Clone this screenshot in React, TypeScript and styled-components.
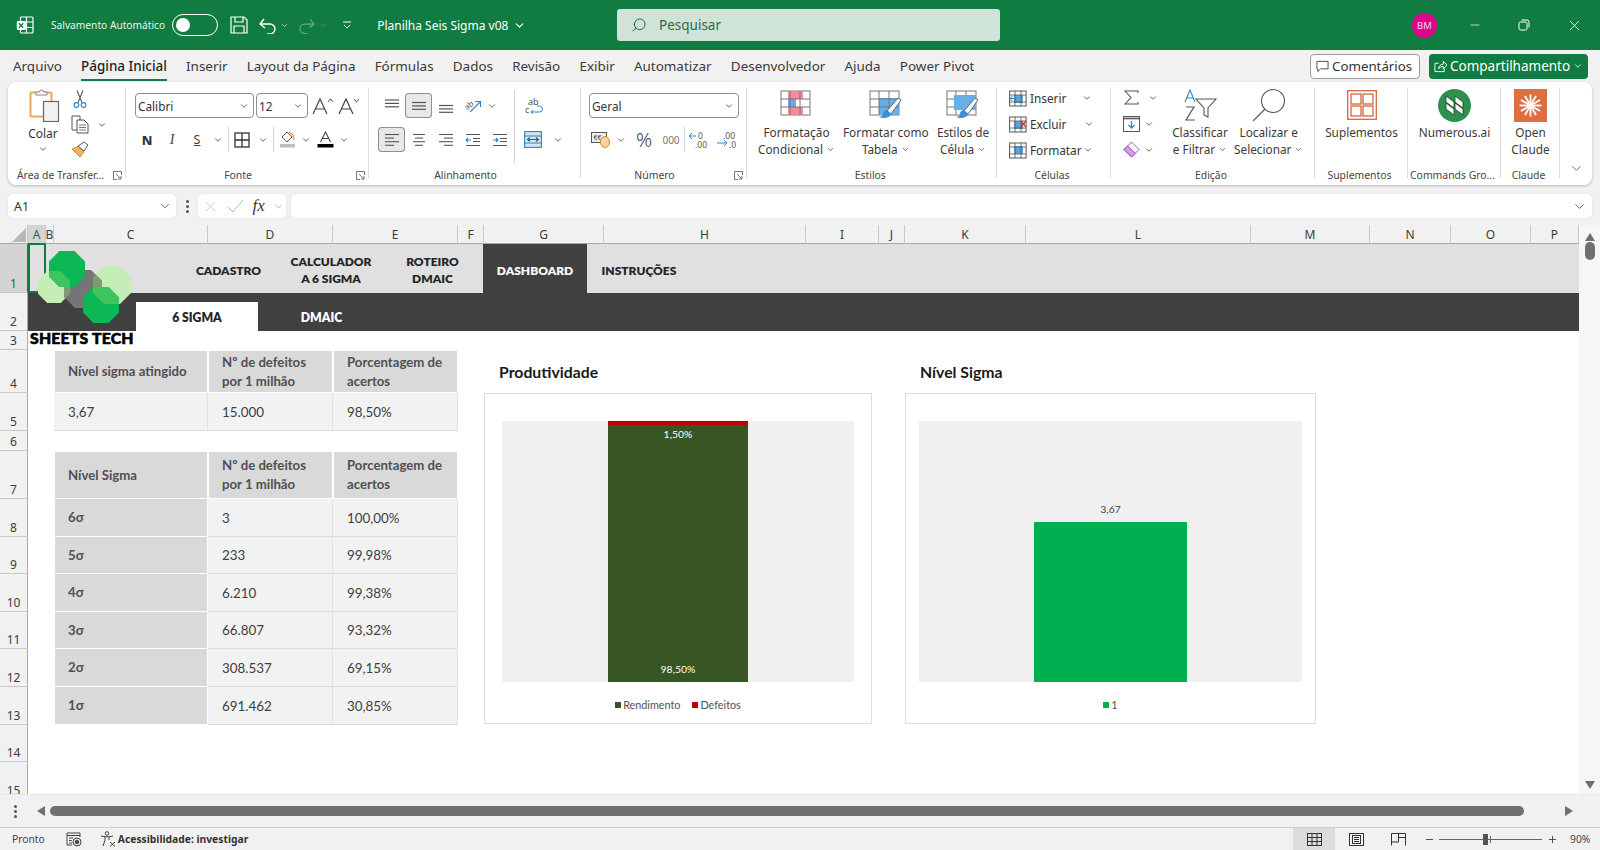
import { ChevronDown, Minus, Plus, Search, X } from 'lucide-react'
import styled, { createGlobalStyle } from 'styled-components'

const UI_FONT = '"Noto Sans", "Open Sans", sans-serif'
const SHEET_FONT = 'Lato, "Noto Sans", sans-serif'
const GREEN = '#107c41'

const COLS = [
  ['A', 18], ['B', 8], ['C', 154], ['D', 125], ['E', 125], ['F', 26], ['G', 120], ['H', 202],
  ['I', 73], ['J', 26], ['K', 121], ['L', 225], ['M', 119], ['N', 81], ['O', 80], ['P', 48],
] as const
const ROWS = [49, 38, 19, 43, 38, 20, 48, 38, 37, 38, 37, 38, 38, 37, 38]

const SIGMA_ROWS = [
  ['6σ', '3', '100,00%'],
  ['5σ', '233', '99,98%'],
  ['4σ', '6.210', '99,38%'],
  ['3σ', '66.807', '93,32%'],
  ['2σ', '308.537', '69,15%'],
  ['1σ', '691.462', '30,85%'],
]

const TABS = ['Arquivo', 'Página Inicial', 'Inserir', 'Layout da Página', 'Fórmulas', 'Dados', 'Revisão', 'Exibir', 'Automatizar', 'Desenvolvedor', 'Ajuda', 'Power Pivot']

const NAV = [
  { lines: ['CADASTRO'], w: 103 },
  { lines: ['CALCULADOR', 'A 6 SIGMA'], w: 102 },
  { lines: ['ROTEIRO', 'DMAIC'], w: 101 },
  { lines: ['DASHBOARD'], w: 104, dark: true },
  { lines: ['INSTRUÇÕES'], w: 104 },
]

const Chev = ({ w = 12 }: { w?: number }) => (
  <IconBtn $w={w}>
    <ChevronDown size={10} strokeWidth={2} color="#444" />
  </IconBtn>
)

const octagon = (cx: number, cy: number, r: number) => {
  const k = r * 0.42
  return [
    [cx - k, cy - r], [cx + k, cy - r], [cx + r, cy - k], [cx + r, cy + k],
    [cx + k, cy + r], [cx - k, cy + r], [cx - r, cy + k], [cx - r, cy - k],
  ].map((p) => p.join(',')).join(' ')
}

const LogoMark = () => {
  const leftLight = octagon(26, 42, 16)
  const rightLight = octagon(84, 40, 19)
  const gray = octagon(55, 44, 19)
  const topGreen = octagon(39, 24, 18)
  const bottomGreen = octagon(73, 60, 18)
  return (
    <LogoSvg width="112" height="90" viewBox="0 0 112 90">
      <defs>
        <clipPath id="lightL"><polygon points={leftLight} /></clipPath>
        <clipPath id="lightR"><polygon points={rightLight} /></clipPath>
        <clipPath id="grayC"><polygon points={gray} /></clipPath>
      </defs>
      <polygon points={leftLight} fill="#c6edb6" />
      <polygon points={rightLight} fill="#c6edb6" />
      <polygon points={gray} fill="#757575" />
      <polygon points={rightLight} fill="#7f9a72" clipPath="url(#grayC)" />
      <polygon points={leftLight} fill="#7f9a72" clipPath="url(#grayC)" />
      <polygon points={topGreen} fill="#0cb856" />
      <polygon points={bottomGreen} fill="#0cb856" />
      <polygon points={topGreen} fill="#3fc45f" clipPath="url(#lightL)" />
      <polygon points={bottomGreen} fill="#3fc45f" clipPath="url(#lightR)" />
    </LogoSvg>
  )
}

const ExcelLogo = () => (
  <svg width="18" height="18" viewBox="0 0 18 18" fill="none" stroke="#fff" strokeWidth="1.2">
    <rect x="4.5" y="1" width="12.5" height="16" rx="1" />
    <path d="M10.5 1v16M4.5 6h12.5M4.5 11.5h12.5" />
    <rect x="0.8" y="5" width="9" height="9" rx="1" fill="#fff" stroke="none" />
    <path d="M3 7.2l4.2 4.6M7.2 7.2L3 11.8" stroke={GREEN} strokeWidth="1.3" />
  </svg>
)

const Paste = () => (
  <svg width="32" height="34" viewBox="0 0 32 34">
    <rect x="1.5" y="4.5" width="21" height="24" rx="1" fill="#fff" stroke="#eba95c" strokeWidth="2" />
    <path d="M7 6V4h3.5a2 2 0 0 1 4 0H18v3H7z" fill="#fff" stroke="#888" strokeWidth="1" />
    <rect x="14.5" y="13.5" width="15" height="20" fill="#f2f2f2" stroke="#666" strokeWidth="1.2" />
  </svg>
)

const Scissors = () => (
  <svg width="14" height="19" viewBox="0 0 14 19" fill="none" strokeWidth="1.1">
    <path d="M4 0.5l5 12M10 0.5l-5 12" stroke="#555" />
    <circle cx="3.4" cy="15" r="2.4" stroke="#2f86c1" />
    <circle cx="10.6" cy="15" r="2.4" stroke="#2f86c1" />
  </svg>
)

const CopyIcon = () => (
  <svg width="18" height="19" viewBox="0 0 18 19" fill="#fff" stroke="#555" strokeWidth="1">
    <path d="M1 1h8v14H1z" />
    <path d="M6 5h7l4 4v9H6z" />
    <path d="M8 10h7M8 12.5h7M8 15h7" strokeWidth=".8" />
  </svg>
)

const Painter = () => (
  <svg width="19" height="17" viewBox="0 0 19 17">
    <path d="M1 8l7-3 5 6-4 5z" fill="#f0b45f" stroke="#d78f35" />
    <path d="M7 5l6-4 4 3-4 6z" fill="#fff" stroke="#555" />
  </svg>
)

const BigA = ({ up }: { up: boolean }) => (
  <svg width="24" height="20" viewBox="0 0 24 20" fill="none">
    <path d="M2 18L9 3l7 15M4.5 13h9" stroke="#444" strokeWidth="1.2" />
    <path d={up ? 'M17 6l2.5-3L22 6' : 'M17 3l2.5 3L22 3'} stroke={up ? '#666' : '#2f86c1'} strokeWidth="1.1" />
  </svg>
)

const BorderIcon = () => (
  <svg width="16" height="16" viewBox="0 0 16 16" fill="none" stroke="#333" strokeWidth="1.3">
    <rect x="1" y="1" width="14" height="14" />
    <path d="M8 1v14M1 8h14" />
  </svg>
)

const FillIcon = () => (
  <svg width="17" height="17" viewBox="0 0 17 17">
    <path d="M8 1l5 5-5 5-5-5z" fill="#fff" stroke="#555" />
    <path d="M10 1l4 3 1 5" fill="none" stroke="#f0a030" strokeWidth="1.4" />
    <rect x="1" y="13" width="15" height="3.5" fill="#bdbdbd" />
  </svg>
)

const FontColor = () => (
  <svg width="17" height="17" viewBox="0 0 17 17">
    <path d="M3.5 11L8.5 1l5 10M5.5 7.5h6" fill="none" stroke="#444" strokeWidth="1.1" />
    <rect x="0.5" y="13" width="16" height="3.5" fill="#000" />
  </svg>
)

const LINES: Record<string, [number, number][]> = {
  left: [[1, 15], [1, 10], [1, 15], [1, 10]],
  center: [[2, 14], [4, 12], [2, 14], [4, 12]],
  right: [[1, 15], [6, 15], [1, 15], [6, 15]],
}

const AlignLines = ({ kind }: { kind: 'left' | 'center' | 'right' }) => (
  <svg width="16" height="14" viewBox="0 0 16 14" stroke="#555" strokeWidth="1.1">
    {LINES[kind].map(([a, b], i) => <line key={i} x1={a} x2={b} y1={1.5 + i * 3.6} y2={1.5 + i * 3.6} />)}
  </svg>
)

const VAlignLines = ({ pos }: { pos: number }) => (
  <svg width="16" height="16" viewBox="0 0 16 16" stroke="#555" strokeWidth="1.2">
    {[0, 1, 2].map((i) => <line key={i} x1={1} x2={15} y1={pos + i * 3.4} y2={pos + i * 3.4} />)}
  </svg>
)

const Indent = ({ flip }: { flip?: boolean }) => (
  <svg width="16" height="14" viewBox="0 0 16 14" fill="none" strokeWidth="1.1">
    <path d="M1 1.5h14M8 5.5h7M8 8.5h7M1 12.5h14" stroke="#555" />
    <path d={flip ? 'M1 7h5M4 5l2 2-2 2' : 'M6 7H1M3 5L1 7l2 2'} stroke="#2f86c1" />
  </svg>
)

const Orientation = () => (
  <svg width="19" height="17" viewBox="0 0 19 17" fill="none" strokeWidth="1.1" overflow="visible">
    <text x="1" y="11" fontSize="8" fill="#555" fontFamily="Noto Sans" transform="rotate(-40 6 8)">ab</text>
    <path d="M7 15L17 5M12 4.5h5.5V10" stroke="#2f86c1" />
  </svg>
)

const WrapIcon = () => (
  <svg width="17" height="18" viewBox="0 0 17 18" fill="none" overflow="visible">
    <text x="3" y="8" fontSize="9" fill="#555" fontFamily="Noto Sans">ab</text>
    <text x="0" y="16" fontSize="9" fill="#555" fontFamily="Noto Sans">c</text>
    <path d="M12 9h2.5a2.5 2.5 0 0 1 0 6H6M8 13l-2 2 2 2" stroke="#2f86c1" />
  </svg>
)

const MergeIcon = () => (
  <svg width="18" height="17" viewBox="0 0 18 17" fill="#cfe6f6" stroke="#2f86c1" strokeWidth="1.1">
    <rect x="0.6" y="0.6" width="16.8" height="15.8" />
    <path d="M0.6 5h16.8M0.6 12h16.8" />
    <path d="M3.5 8.5h11M6 6.5l-2.5 2 2.5 2M12 6.5l2.5 2-2.5 2" fill="none" stroke="#555" />
  </svg>
)

const Currency = () => (
  <svg width="20" height="17" viewBox="0 0 20 17">
    <rect x="0.5" y="1.5" width="15" height="10" fill="#eee" stroke="#555" />
    <text x="2.5" y="9" fontSize="7" fill="#444" fontFamily="Noto Sans">€€</text>
    <ellipse cx="14" cy="11" rx="4.6" ry="5.5" fill="#f9d29a" stroke="#e08a26" />
  </svg>
)

const Decimal = ({ more }: { more: boolean }) => (
  <svg width="24" height="18" viewBox="0 0 24 18" fill="none" overflow="visible">
    <text x={more ? 7 : 10} y="8" fontSize="8.5" fill="#555" fontFamily="Noto Sans">{more ? '.00' : '0'}</text>
    <text x={more ? 13 : 7} y="17" fontSize="8.5" fill="#555" fontFamily="Noto Sans">{more ? '.0' : '.00'}</text>
    <path d={more ? 'M1 12h10M8 9l3 3-3 3' : 'M8 5H1M4 2L1 5l3 3'} stroke="#2f86c1" />
  </svg>
)

const StyleGrid = ({ kind }: { kind: 'cond' | 'table' | 'cell' }) => (
  <svg width="34" height="30" viewBox="0 0 34 30">
    <rect x="1" y="1" width="29" height="24" fill="#fff" stroke="#777" />
    {kind === 'cond' && (
      <>
        <rect x="8" y="1" width="15" height="8" fill="#f78a9a" />
        <rect x="8" y="9" width="8" height="8" fill="#6aa9e8" />
        <rect x="8" y="17" width="15" height="8" fill="#f78a9a" />
      </>
    )}
    {kind === 'table' && <rect x="10" y="8" width="20" height="17" fill="#6aaee8" />}
    <path d="M1 9h29M1 17h29M10 1v24M20 1v24" stroke="#777" fill="none" />
    {kind === 'cell' && <rect x="8" y="5" width="22" height="15" fill="#6aaee8" />}
    {kind !== 'cond' && (
      <>
        <path d="M18 21L29 8l3 2-10 14z" fill="#fff" stroke="#666" />
        <path d="M18 20c-3 0-4 2-4 4s-2 3-4 3c4 2 11 1 12-3z" fill="#3c8fd6" />
      </>
    )}
  </svg>
)

const CellIcon = ({ kind }: { kind: 'ins' | 'del' | 'fmt' }) => (
  <svg width="18" height="17" viewBox="0 0 18 17">
    <rect x="0.6" y="1" width="16.5" height="15" fill="#fff" stroke="#555" />
    <rect x="5" y={kind === 'fmt' ? 4 : 5} width="9" height="8" fill="#5aa5dc" />
    <path d="M0.6 5h16.5M0.6 12h16.5M6 1v15M12 1v15" stroke="#555" fill="none" strokeWidth=".8" />
    {kind === 'del' && <path d="M12 5l5 6M17 5l-5 6" stroke="#d13438" strokeWidth="1.3" />}
    {kind === 'ins' && <path d="M1 8.5h7M3.5 6L1 8.5 3.5 11" stroke="#2f86c1" fill="none" />}
  </svg>
)

const Sigma = () => (
  <svg width="15" height="15" viewBox="0 0 15 15" fill="none" stroke="#555" strokeWidth="1.1">
    <path d="M14 3V1H1l6 6.5L1 14h13v-2" />
  </svg>
)

const FillDown = () => (
  <svg width="17" height="16" viewBox="0 0 17 16" fill="#fff" stroke="#555">
    <rect x="0.5" y="0.5" width="16" height="15" />
    <path d="M0.5 2.5h16" strokeWidth="1.6" />
    <path d="M8.5 5v7M5.5 9l3 3 3-3" fill="none" stroke="#2f86c1" strokeWidth="1.3" />
  </svg>
)

const Eraser = () => (
  <svg width="17" height="17" viewBox="0 0 17 17">
    <path d="M8.5 1L16 8.5 8.5 16 1 8.5z" fill="#fff" stroke="#a54fc2" />
    <path d="M4.7 4.8l7.5 7.5L8.5 16 1 8.5z" fill="#d79ae6" stroke="#a54fc2" />
  </svg>
)

const SortFilter = () => (
  <svg width="33" height="33" viewBox="0 0 33 33" fill="none">
    <path d="M1 13L6 1l5 12M2.8 9h6.4" stroke="#2f86c1" strokeWidth="1.1" />
    <path d="M2 18h8L2 31h9" stroke="#555" strokeWidth="1.2" />
    <path d="M12 10h20l-8 9v9l-4-2v-7z" stroke="#555" strokeWidth="1.1" />
  </svg>
)

const Magnifier = () => (
  <svg width="34" height="34" viewBox="0 0 34 34" fill="none" stroke="#555" strokeWidth="1.1">
    <circle cx="21" cy="13" r="11.5" />
    <path d="M13 21L1 33" />
  </svg>
)

const AddIns = () => (
  <svg width="30" height="30" viewBox="0 0 30 30" fill="#fff" stroke="#d0683f" strokeWidth="1.3">
    <rect x="0.7" y="0.7" width="28.6" height="28.6" />
    <rect x="4" y="4" width="10" height="10" />
    <rect x="16" y="4" width="10" height="10" />
    <rect x="4" y="16" width="10" height="10" />
    <rect x="16" y="16" width="10" height="10" />
  </svg>
)

const Numerous = () => (
  <svg width="33" height="33" viewBox="0 0 33 33">
    <circle cx="16.5" cy="16.5" r="16.5" fill="#2f8f4f" />
    <path d="M8 7l8 6v6l-8-6zM8 14l8 6v6l-8-6zM17 7l8 6v6l-8-6zM17 14l8 6v6l-8-6z" fill="#fff" stroke="#1c3d2a" strokeWidth=".8" />
  </svg>
)

const ClaudeMark = () => (
  <svg width="33" height="33" viewBox="0 0 33 33">
    <rect width="33" height="33" fill="#dd6f44" />
    {Array.from({ length: 12 }).map((_, i) => (
      <line key={i} x1="16.5" y1="16.5" x2={16.5 + 11 * Math.cos((i * Math.PI) / 6)} y2={16.5 + 11 * Math.sin((i * Math.PI) / 6)} stroke="#fff" strokeWidth="1.8" />
    ))}
  </svg>
)

const LauncherIcon = () => (
  <svg width="9" height="9" viewBox="0 0 9 9" fill="none" stroke="#666" strokeWidth=".9">
    <path d="M8.5 4V0.5H0.5v8H4M3 3l5 5M8 5v3H5" />
  </svg>
)

const Arrow = ({ dir }: { dir: 'up' | 'down' | 'left' | 'right' }) => {
  const d = { up: 'M5 1l5 8H0z', down: 'M5 9L0 1h10z', left: 'M1 5l8-5v10z', right: 'M9 5L1 0v10z' }[dir]
  return <svg width="10" height="10" viewBox="0 0 10 10"><path d={d} fill="#6f6f6f" /></svg>
}

const Dots = () => (
  <DotColumn><i /><i /><i /></DotColumn>
)

export default function App() {
  return (
    <>
      <GlobalStyle />
      <Window>
        <TitleBar>
          <TitleLeft>
            <ExcelLogo />
            <AutoSaveLabel>Salvamento Automático</AutoSaveLabel>
            <Toggle><Knob /></Toggle>
            <TitleIcon $ml={12}>
              <svg width="18" height="18" viewBox="0 0 18 18" fill="none" stroke="#fff" strokeWidth="1.2">
                <path d="M1 1h13l3 3v13H1z" /><path d="M5 1v5h8V1M4 17v-7h10v7" />
              </svg>
            </TitleIcon>
            <TitleIcon $ml={11}>
              <svg width="18" height="17" viewBox="0 0 18 17" fill="none" stroke="#fff" strokeWidth="1.4">
                <path d="M1 7h10a5 5 0 0 1 0 10H8M5 2L1 7l5 4" />
              </svg>
            </TitleIcon>
            <TitleIcon $ml={3}><ChevronDown size={9} color="#cfe3d8" /></TitleIcon>
            <TitleIcon $ml={9} $dim>
              <svg width="17" height="17" viewBox="0 0 18 17" fill="none" stroke="#fff" strokeWidth="1.3">
                <path d="M17 7H7a5 5 0 0 0 0 10h3M13 2l4 5-5 4" />
              </svg>
            </TitleIcon>
            <TitleIcon $ml={4} $dim><ChevronDown size={9} color="#cfe3d8" /></TitleIcon>
            <TitleIcon $ml={14}>
              <svg width="10" height="10" viewBox="0 0 10 10" fill="none" stroke="#fff"><path d="M1 2h8M2 5l3 3 3-3" /></svg>
            </TitleIcon>
            <DocTitle>Planilha Seis Sigma v08</DocTitle>
            <TitleIcon $ml={5}><ChevronDown size={13} color="#fff" /></TitleIcon>
          </TitleLeft>
          <SearchBox>
            <Search size={16} color="#1d5c3a" style={{ transform: 'scaleX(-1)' }} strokeWidth={1.4} />
            <span>Pesquisar</span>
          </SearchBox>
          <TitleRight>
            <Avatar>BM</Avatar>
            <WinBtn $ml={23}><Minus size={14} strokeWidth={1.2} color="#fff" /></WinBtn>
            <WinBtn $ml={20}>
              <svg width="12" height="12" viewBox="0 0 12 12" fill="none" stroke="#fff"><rect x="1" y="3" width="8" height="8" rx="1.5" /><path d="M3.5 1H9a2 2 0 0 1 2 2v5.5" /></svg>
            </WinBtn>
            <WinBtn $ml={22}><X size={17} strokeWidth={1.2} color="#fff" /></WinBtn>
          </TitleRight>
        </TitleBar>

        <TabRow>
          <Tabs>
            {TABS.map((t) => <Tab key={t} $active={t === 'Página Inicial'}>{t}</Tab>)}
          </Tabs>
          <TabActions>
            <CommentBtn>
              <svg width="13" height="13" viewBox="0 0 14 13" fill="none" stroke="#444"><path d="M1 1h12v8H5l-3 3V9H1z" /></svg>
              Comentários
            </CommentBtn>
            <ShareBtn>
              <svg width="13" height="13" viewBox="0 0 14 13" fill="none" stroke="#fff"><path d="M5 3H1v9h10V8M5 9c0-3 2-5 5-5V1l4 4-4 4V6.5C8 6.5 6 7 5 9z" /></svg>
              Compartilhamento
              <ChevronDown size={10} color="#fff" />
            </ShareBtn>
          </TabActions>
        </TabRow>

        <Ribbon>
          <Group $w={118}>
            <GroupBody $pl={8}>
              <PasteCol>
                <Paste />
                <span>Colar</span>
                <ChevronDown size={10} color="#444" />
              </PasteCol>
              <ClipCol>
                <IconBtn $w={20}><Scissors /></IconBtn>
                <ClipRow><IconBtn $w={20}><CopyIcon /></IconBtn><Chev w={24} /></ClipRow>
                <IconBtn $w={20}><Painter /></IconBtn>
              </ClipCol>
            </GroupBody>
            <LabelRow><GroupLabel $pr={0}>Área de Transfer...</GroupLabel><LauncherIcon /></LabelRow>
          </Group>

          <Group $w={243}>
            <GroupBody $pl={9}>
              <StackedRows>
                <ToolRow>
                  <Combo $w={119}>Calibri<ChevronDown size={10} color="#444" /></Combo>
                  <Combo $w={52}>12<ChevronDown size={10} color="#444" /></Combo>
                  <IconBtn $w={26}><BigA up /></IconBtn>
                  <IconBtn $w={26}><BigA up={false} /></IconBtn>
                </ToolRow>
                <ToolRow>
                  <IconBtn $w={24}><BoldN>N</BoldN></IconBtn>
                  <IconBtn $w={26}><ItalicI>I</ItalicI></IconBtn>
                  <IconBtn $w={24}><UnderS>S</UnderS></IconBtn>
                  <Chev w={18} />
                  <RowSep />
                  <IconBtn $w={24}><BorderIcon /></IconBtn>
                  <Chev w={18} />
                  <RowSep />
                  <IconBtn $w={24}><FillIcon /></IconBtn>
                  <Chev w={14} />
                  <IconBtn $w={24}><FontColor /></IconBtn>
                  <Chev w={14} />
                </ToolRow>
              </StackedRows>
            </GroupBody>
            <LabelRow><GroupLabel $pr={6}>Fonte</GroupLabel><LauncherIcon /></LabelRow>
          </Group>

          <Group $w={212}>
            <GroupBody $pl={9}>
              <StackedRows>
                <ToolRow>
                  <IconBtn $w={27}><VAlignLines pos={2} /></IconBtn>
                  <IconBtn $w={27} $on><VAlignLines pos={4.5} /></IconBtn>
                  <IconBtn $w={27}><VAlignLines pos={7.5} /></IconBtn>
                  <IconBtn $w={27}><Orientation /></IconBtn>
                  <Chev w={12} />
                </ToolRow>
                <ToolRow>
                  <IconBtn $w={27} $on><AlignLines kind="left" /></IconBtn>
                  <IconBtn $w={27}><AlignLines kind="center" /></IconBtn>
                  <IconBtn $w={27}><AlignLines kind="right" /></IconBtn>
                  <IconBtn $w={27}><Indent /></IconBtn>
                  <IconBtn $w={27}><Indent flip /></IconBtn>
                </ToolRow>
              </StackedRows>
              <InnerSep />
              <StackedRows>
                <ToolRow><IconBtn $w={36}><WrapIcon /></IconBtn></ToolRow>
                <ToolRow><IconBtn $w={36}><MergeIcon /></IconBtn><Chev w={14} /></ToolRow>
              </StackedRows>
            </GroupBody>
            <LabelRow><GroupLabel $pr={6}>Alinhamento</GroupLabel><LauncherSpacer /></LabelRow>
          </Group>

          <Group $w={166}>
            <GroupBody $pl={8}>
              <StackedRows>
                <ToolRow><Combo $w={150}>Geral<ChevronDown size={10} color="#444" /></Combo></ToolRow>
                <ToolRow>
                  <IconBtn $w={24}><Currency /></IconBtn>
                  <Chev w={16} />
                  <IconBtn $w={30}><Percent>%</Percent></IconBtn>
                  <IconBtn $w={24}><Thousand>000</Thousand></IconBtn>
                  <RowSep />
                  <IconBtn $w={28}><Decimal more={false} /></IconBtn>
                  <IconBtn $w={28}><Decimal more /></IconBtn>
                </ToolRow>
              </StackedRows>
            </GroupBody>
            <LabelRow><GroupLabel $pr={6}>Número</GroupLabel><LauncherIcon /></LabelRow>
          </Group>

          <Group $w={250}>
            <GroupBody $pl={3}>
              <LargeBtn $w={93}><StyleGrid kind="cond" /><BtnText>Formatação<br />Condicional<ChevronDown size={9} color="#444" /></BtnText></LargeBtn>
              <LargeBtn $w={84}><StyleGrid kind="table" /><BtnText>Formatar como<br />Tabela<ChevronDown size={9} color="#444" /></BtnText></LargeBtn>
              <LargeBtn $w={69}><StyleGrid kind="cell" /><BtnText>Estilos de<br />Célula<ChevronDown size={9} color="#444" /></BtnText></LargeBtn>
            </GroupBody>
            <LabelRow><GroupLabel $pr={0}>Estilos</GroupLabel></LabelRow>
          </Group>

          <Group $w={114}>
            <CellsBody>
              <CellRow><CellIcon kind="ins" /><CellText $w={54}>Inserir</CellText><Chev w={12} /></CellRow>
              <CellRow><CellIcon kind="del" /><CellText $w={56}>Excluir</CellText><Chev w={12} /></CellRow>
              <CellRow><CellIcon kind="fmt" /><CellText $w={50}>Formatar</CellText><Chev w={12} /></CellRow>
            </CellsBody>
            <LabelRow><GroupLabel $pr={0}>Células</GroupLabel></LabelRow>
          </Group>

          <Group $w={204}>
            <GroupBody $pl={12}>
              <EditCol>
                <ClipRow><IconBtn $w={17}><Sigma /></IconBtn><Chev w={25} /></ClipRow>
                <ClipRow><IconBtn $w={17}><FillDown /></IconBtn><Chev w={17} /></ClipRow>
                <ClipRow><IconBtn $w={17}><Eraser /></IconBtn><Chev w={17} /></ClipRow>
              </EditCol>
              <LargeBtn $w={68}><SortFilter /><BtnText>Classificar<br />e Filtrar<ChevronDown size={9} color="#444" /></BtnText></LargeBtn>
              <LargeBtn $w={68}><Magnifier /><BtnText>Localizar e<br />Selecionar<ChevronDown size={9} color="#444" /></BtnText></LargeBtn>
            </GroupBody>
            <LabelRow><GroupLabel $pr={0}>Edição</GroupLabel></LabelRow>
          </Group>

          <Group $w={93}>
            <GroupBody $pl={0}><LargeBtn $w={93}><AddIns /><BtnText>Suplementos</BtnText></LargeBtn></GroupBody>
            <LabelRow><GroupLabel $pr={0}>Suplementos</GroupLabel></LabelRow>
          </Group>

          <Group $w={93}>
            <GroupBody $pl={0}><LargeBtn $w={93}><Numerous /><BtnText>Numerous.ai</BtnText></LargeBtn></GroupBody>
            <LabelRow><GroupLabel $pr={0}>Commands Gro...</GroupLabel></LabelRow>
          </Group>

          <Group $w={59}>
            <GroupBody $pl={0}><LargeBtn $w={59}><ClaudeMark /><BtnText>Open<br />Claude</BtnText></LargeBtn></GroupBody>
            <LabelRow><GroupLabel $pr={0}>Claude</GroupLabel></LabelRow>
          </Group>

          <Collapse><ChevronDown size={15} strokeWidth={1.2} color="#444" /></Collapse>
        </Ribbon>

        <FormulaBar>
          <NameBox>A1<ChevronDown size={14} strokeWidth={1.4} color="#444" /></NameBox>
          <Dots />
          <FuncBox>
            <X size={17} strokeWidth={1} color="#b5b5b5" />
            <svg width="17" height="14" viewBox="0 0 17 14" fill="none" stroke="#b5b5b5"><path d="M1 8l5 5L16 1" /></svg>
            <Fx>fx</Fx>
            <ChevronDown size={11} strokeWidth={1.2} color="#777" />
          </FuncBox>
          <FormulaInput><ChevronDown size={15} strokeWidth={1.3} color="#444" /></FormulaInput>
        </FormulaBar>

        <SheetArea>
          <Sheet>
            <Corner><svg width="14" height="14" viewBox="0 0 14 14"><path d="M14 0v14H0z" fill="#b8b8b8" /></svg></Corner>
            {COLS.map(([name], i) => (
              <ColHead key={name} $col={i + 2} $active={name === 'A'}>{name}</ColHead>
            ))}
            {ROWS.map((_, i) => (
              <RowHead key={i} $row={i + 2} $active={i === 0}>{i + 1}</RowHead>
            ))}

            <NavBand>
              {NAV.map((n) => (
                <NavItem key={n.lines[0]} $w={n.w} $dark={n.dark}>{n.lines.map((l) => <span key={l}>{l}</span>)}</NavItem>
              ))}
            </NavBand>
            <SelectedCell />
            <SubBand>
              <SubTab $on>6 SIGMA</SubTab>
              <SubTab>DMAIC</SubTab>
            </SubBand>
            <BrandText>SHEETS TECH</BrandText>

            <HeadCell $col={4} $row={5}>Nível sigma atingido</HeadCell>
            <HeadCell $col={5} $row={5}>Nº de defeitos<br />por 1 milhão</HeadCell>
            <HeadCell $col={6} $row={5}>Porcentagem de<br />acertos</HeadCell>
            <ValueCell $col={4} $row={6}>3,67</ValueCell>
            <ValueCell $col={5} $row={6}>15.000</ValueCell>
            <ValueCell $col={6} $row={6}>98,50%</ValueCell>

            <HeadCell $col={4} $row={8}>Nível Sigma</HeadCell>
            <HeadCell $col={5} $row={8}>Nº de defeitos<br />por 1 milhão</HeadCell>
            <HeadCell $col={6} $row={8}>Porcentagem de<br />acertos</HeadCell>
            {SIGMA_ROWS.map(([level, defects, pct], i) => [
              <LevelCell key={level} $col={4} $row={9 + i}>{level}</LevelCell>,
              <ValueCell key={level + 'd'} $col={5} $row={9 + i}>{defects}</ValueCell>,
              <ValueCell key={level + 'p'} $col={6} $row={9 + i}>{pct}</ValueCell>,
            ])}

            <ChartTitle $col={8}>Produtividade</ChartTitle>
            <ChartTitle $col={12}>Nível Sigma</ChartTitle>

            <ChartFrame $from={8} $to={11} $mr={7} $px={17}>
              <Plot>
                <StackBar>
                  <RedCap />
                  <StackLabel>1,50%</StackLabel>
                  <StackLabel>98,50%</StackLabel>
                </StackBar>
              </Plot>
              <Legend>
                <LegendItem><Swatch $c="#375623" />Rendimento</LegendItem>
                <LegendItem><Swatch $c="#c00000" />Defeitos</LegendItem>
              </Legend>
            </ChartFrame>

            <ChartFrame $from={12} $to={15} $mr={54} $px={13}>
              <Plot>
                <SingleBarCol>
                  <BarValue>3,67</BarValue>
                  <SingleBar />
                </SingleBarCol>
              </Plot>
              <Legend>
                <LegendItem><Swatch $c="#00b050" />1</LegendItem>
              </Legend>
            </ChartFrame>

            <LogoMark />
          </Sheet>
          <VScroll>
            <Arrow dir="up" />
            <VThumb />
            <VTrack />
            <Arrow dir="down" />
          </VScroll>
        </SheetArea>

        <HScrollRow>
          <Dots />
          <HTrack>
            <Arrow dir="left" />
            <HThumb />
            <Arrow dir="right" />
          </HTrack>
        </HScrollRow>

        <StatusBar>
          <StatusLeft>
            <span>Pronto</span>
            <MacroSlot>
              <svg width="16" height="15" viewBox="0 0 16 15" fill="none" stroke="#444">
                <path d="M1 1h13v4M1 3.5h13M1 1v12h5M3 6h4M3 8.5h3M3 11h3" /><circle cx="11" cy="10" r="4" /><circle cx="11" cy="10" r="1.8" fill="#444" />
              </svg>
            </MacroSlot>
            <AccessSlot>
              <svg width="16" height="16" viewBox="0 0 16 16" fill="none" stroke="#444">
                <circle cx="7" cy="2.5" r="1.8" /><path d="M1 5c4 1 8 1 12 0M5 6v3l-2 6M9 6v3M10 11l5 4.5M15 11l-5 4.5" />
              </svg>
              <b>Acessibilidade: investigar</b>
            </AccessSlot>
          </StatusLeft>
          <StatusRight>
            <ViewBtn $on>
              <svg width="15" height="13" viewBox="0 0 15 13" fill="none" stroke="#333"><rect x=".5" y=".5" width="14" height="12" /><path d="M5 .5v12M10 .5v12M.5 4.5h14M.5 8.5h14" /></svg>
            </ViewBtn>
            <ViewBtn>
              <svg width="15" height="13" viewBox="0 0 15 13" fill="none" stroke="#333"><rect x=".5" y=".5" width="14" height="12" /><rect x="3.5" y="2.5" width="8" height="8" /><path d="M5 4.5h5M5 6.500h5M5 8.5h5" /></svg>
            </ViewBtn>
            <ViewBtn>
              <svg width="15" height="13" viewBox="0 0 15 13" fill="none" stroke="#333"><path d="M.5 12.5V.5h14v12M.5 9h7V.5M7.5 4.5h7" /></svg>
            </ViewBtn>
            <ZoomSign><Minus size={11} color="#444" /></ZoomSign>
            <ZoomTrack><ZoomThumb /></ZoomTrack>
            <ZoomSign><Plus size={11} color="#444" /></ZoomSign>
            <ZoomPct>90%</ZoomPct>
          </StatusRight>
        </StatusBar>
      </Window>
    </>
  )
}

const GlobalStyle = createGlobalStyle`
  html, body {
    margin: 0;
    padding: 0;
    background: #f1f1f1;
  }
  * {
    box-sizing: border-box;
  }
`

const Window = styled.div`
  display: flex;
  flex-direction: column;
  width: 1600px;
  height: 850px;
  overflow: hidden;
  background: #f1f1f1;
  font-family: ${UI_FONT};
  color: #333;
`

const TitleBar = styled.header`
  position: relative;
  display: flex;
  align-items: center;
  justify-content: space-between;
  flex: 0 0 50px;
  padding: 0 11px 0 16px;
  background: ${GREEN};
  color: #fff;
`

const TitleLeft = styled.div`
  display: flex;
  align-items: center;
`

const AutoSaveLabel = styled.span`
  margin-left: 17px;
  font-size: 10.2px;
  color: #eaf3ee;
`

const Toggle = styled.div`
  display: flex;
  align-items: center;
  width: 46px;
  height: 22px;
  margin-left: 7px;
  padding-left: 3px;
  border: 1px solid #fff;
  border-radius: 11px;
`

const Knob = styled.div`
  width: 14px;
  height: 14px;
  border-radius: 50%;
  background: #fff;
`

const TitleIcon = styled.span<{ $ml: number; $dim?: boolean }>`
  display: inline-flex;
  margin-left: ${(p) => p.$ml}px;
  opacity: ${(p) => (p.$dim ? 0.35 : 1)};
`

const DocTitle = styled.span`
  margin-left: 25px;
  font-size: 12px;
`

const SearchBox = styled.div`
  position: absolute;
  left: 617px;
  top: 9px;
  display: flex;
  align-items: center;
  gap: 12px;
  width: 383px;
  height: 32px;
  padding-left: 14px;
  border-radius: 3px;
  background: #cfe3d8;
  font-size: 13.5px;
  color: #2c6b4a;
`

const TitleRight = styled.div`
  display: flex;
  align-items: center;
`

const Avatar = styled.div`
  display: flex;
  align-items: center;
  justify-content: center;
  width: 25px;
  height: 25px;
  border-radius: 50%;
  background: #e3008c;
  font-size: 9.5px;
  color: #f5d6ea;
`

const WinBtn = styled.div<{ $ml: number }>`
  display: flex;
  justify-content: center;
  width: 29px;
  margin-left: ${(p) => p.$ml}px;
`

const TabRow = styled.div`
  display: flex;
  align-items: center;
  justify-content: space-between;
  flex: 0 0 32px;
  padding: 0 12px 0 13px;
`

const Tabs = styled.nav`
  display: flex;
  gap: 19.2px;
`

const Tab = styled.span<{ $active?: boolean }>`
  position: relative;
  padding: 5px 0 4px;
  font-size: 13.45px;
  font-weight: ${(p) => (p.$active ? 500 : 400)};
  color: ${(p) => (p.$active ? '#1e1e1e' : '#3a3a3a')};
  border-bottom: 2px solid ${(p) => (p.$active ? GREEN : 'transparent')};
`

const TabActions = styled.div`
  display: flex;
  align-items: center;
  gap: 9px;
`

const CommentBtn = styled.div`
  display: flex;
  align-items: center;
  gap: 3px;
  height: 25px;
  width: 110px;
  padding-left: 5px;
  border: 1px solid #9a9a9a;
  border-radius: 4px;
  background: #fff;
  font-size: 13.3px;
`

const ShareBtn = styled.div`
  display: flex;
  align-items: center;
  gap: 3px;
  height: 25px;
  width: 159px;
  padding-left: 5px;
  border-radius: 4px;
  background: ${GREEN};
  font-size: 13.5px;
  color: #fff;
  white-space: nowrap;
`

const Ribbon = styled.section`
  display: flex;
  flex: 0 0 103px;
  margin: 0 8px;
  border-radius: 8px;
  background: #fff;
  box-shadow: 0 1px 3px rgba(0, 0, 0, 0.22);
`

const Group = styled.div<{ $w: number }>`
  position: relative;
  display: grid;
  grid-template-rows: 1fr 20px;
  flex: 0 0 ${(p) => p.$w}px;
  min-width: 0;
  &::after {
    content: '';
    position: absolute;
    top: 6px;
    right: 0;
    bottom: 7px;
    width: 1px;
    background: #dcdcdc;
  }
`

const GroupBody = styled.div<{ $pl: number }>`
  display: flex;
  padding-left: ${(p) => p.$pl}px;
`

const LabelRow = styled.div`
  display: flex;
  align-items: center;
  padding-right: 4px;
`

const GroupLabel = styled.span<{ $pr: number }>`
  flex: 1;
  padding-right: ${(p) => p.$pr}px;
  font-size: 10.4px;
  text-align: center;
  white-space: nowrap;
  color: #444;
`

const LauncherSpacer = styled.span`
  width: 9px;
`

const IconBtn = styled.span<{ $w: number; $on?: boolean }>`
  display: inline-flex;
  align-items: center;
  justify-content: center;
  flex: 0 0 auto;
  width: ${(p) => p.$w}px;
  height: 25px;
  border-radius: 4px;
  ${(p) => p.$on && 'background: #e8e8e8; box-shadow: inset 0 0 0 1px #8e8e8e;'}
`

const PasteCol = styled.div`
  display: flex;
  flex-direction: column;
  align-items: center;
  width: 54px;
  padding-top: 6px;
  font-size: 12px;
  span {
    margin-top: 3px;
  }
  svg:first-child {
    margin-left: 4px;
  }
  svg:last-child {
    margin-top: 2px;
  }
`

const ClipCol = styled.div`
  display: flex;
  flex-direction: column;
  align-items: flex-start;
  padding-top: 5px;
`

const ClipRow = styled.div`
  display: flex;
  align-items: center;
`

const StackedRows = styled.div`
  display: flex;
  flex-direction: column;
  gap: 9px;
  padding-top: 11px;
`

const ToolRow = styled.div`
  display: flex;
  align-items: center;
  height: 25px;
`

const Combo = styled.div<{ $w: number }>`
  display: flex;
  align-items: center;
  justify-content: space-between;
  flex: 0 0 ${(p) => p.$w}px;
  height: 25px;
  margin-right: 2px;
  padding: 0 4px 0 2px;
  border: 1px solid #8e8e8e;
  border-radius: 4px;
  font-size: 11.8px;
  color: #333;
`

const BoldN = styled.b`
  font-size: 13px;
  font-weight: 800;
`

const ItalicI = styled.i`
  font-family: 'Liberation Serif', serif;
  font-size: 14px;
  color: #444;
`

const UnderS = styled.span`
  font-size: 12.5px;
  text-decoration: underline;
  color: #444;
`

const RowSep = styled.span`
  flex: 0 0 1px;
  height: 25px;
  margin: 0 1px;
  background: #d5d5d5;
`

const InnerSep = styled.span`
  flex: 0 0 1px;
  margin: 8px 0 2px 1px;
  background: #d5d5d5;
`

const Percent = styled.span`
  font-size: 20px;
  font-weight: 300;
  color: #444;
`

const Thousand = styled.span`
  font-size: 10px;
  color: #777;
`

const LargeBtn = styled.div<{ $w: number }>`
  display: grid;
  grid-template-rows: 38px auto;
  align-items: center;
  justify-items: center;
  align-content: start;
  flex: 0 0 ${(p) => p.$w}px;
  padding-top: 4px;
`

const BtnText = styled.div`
  font-size: 11.8px;
  line-height: 16.5px;
  text-align: center;
  white-space: nowrap;
  color: #3a3a3a;
  svg {
    margin-left: 3px;
  }
`

const CellsBody = styled.div`
  display: flex;
  flex-direction: column;
  gap: 8px;
  padding: 7px 0 0 12px;
`

const CellRow = styled.div`
  display: flex;
  align-items: center;
  height: 18px;
`

const CellText = styled.span<{ $w: number }>`
  flex: 0 0 ${(p) => p.$w}px;
  padding-left: 3px;
  font-size: 11.8px;
`

const EditCol = styled.div`
  display: flex;
  flex-direction: column;
  flex: 0 0 43px;
  padding-top: 3px;
  gap: 1px;
`

const Collapse = styled.div`
  display: flex;
  flex: 1;
  align-items: flex-end;
  justify-content: center;
  padding-bottom: 9px;
`

const FormulaBar = styled.div`
  display: flex;
  align-items: center;
  flex: 0 0 24px;
  margin: 9px 8px 7px;
`

const NameBox = styled.div`
  display: flex;
  align-items: center;
  justify-content: space-between;
  width: 168px;
  height: 24px;
  padding: 0 4px 0 6px;
  border-radius: 4px;
  background: #fff;
  box-shadow: 0 0 1px rgba(0, 0, 0, 0.3);
  font-size: 12.4px;
`

const DotColumn = styled.div`
  display: flex;
  flex-direction: column;
  align-items: center;
  justify-content: center;
  gap: 2px;
  width: 22px;
  i {
    width: 3px;
    height: 3px;
    border-radius: 50%;
    background: #555;
  }
`

const FuncBox = styled.div`
  display: flex;
  align-items: center;
  justify-content: space-between;
  width: 88px;
  height: 24px;
  padding: 0 2px 0 4px;
  border-radius: 4px;
  background: #fff;
  box-shadow: 0 0 1px rgba(0, 0, 0, 0.3);
`

const Fx = styled.i`
  font-family: 'Liberation Serif', serif;
  font-size: 17px;
  color: #333;
`

const FormulaInput = styled.div`
  display: flex;
  align-items: center;
  justify-content: flex-end;
  flex: 1;
  height: 24px;
  margin-left: 5px;
  padding-right: 5px;
  border-radius: 4px;
  background: #fff;
  box-shadow: 0 0 1px rgba(0, 0, 0, 0.3);
`

const SheetArea = styled.div`
  display: flex;
  flex: 0 0 569px;
`

const Sheet = styled.div`
  position: relative;
  display: grid;
  grid-template-columns: 28px ${COLS.map((c) => `${c[1]}px`).join(' ')};
  grid-template-rows: 19px ${ROWS.map((r) => `${r}px`).join(' ')};
  width: 1579px;
  height: 569px;
  overflow: hidden;
  background: #fff;
  font-family: ${SHEET_FONT};
`

const Corner = styled.div`
  display: flex;
  align-items: flex-end;
  justify-content: flex-end;
  padding: 0 1px 1px 0;
  background: #f1f1f1;
  border-bottom: 1px solid #a8a8a8;
  border-right: 1px solid #c8c8c8;
`

const ColHead = styled.div<{ $col: number; $active?: boolean }>`
  grid-column: ${(p) => p.$col};
  grid-row: 1;
  display: flex;
  align-items: center;
  justify-content: center;
  overflow: hidden;
  background: ${(p) => (p.$active ? '#d4d4d4' : '#f1f1f1')};
  border-right: 1px solid #c8c8c8;
  border-bottom: 1px solid ${(p) => (p.$active ? GREEN : '#a8a8a8')};
  font-family: ${UI_FONT};
  font-size: 12px;
  color: ${(p) => (p.$active ? '#1e6b3c' : '#3c3c3c')};
`

const RowHead = styled.div<{ $row: number; $active?: boolean }>`
  grid-column: 1;
  grid-row: ${(p) => p.$row};
  display: flex;
  align-items: flex-end;
  justify-content: center;
  background: ${(p) => (p.$active ? '#d4d4d4' : '#f1f1f1')};
  border-right: 1px solid ${(p) => (p.$active ? GREEN : '#a8a8a8')};
  border-bottom: 1px solid #c8c8c8;
  font-family: ${UI_FONT};
  font-size: 12px;
  color: ${(p) => (p.$active ? '#1e6b3c' : '#3c3c3c')};
`

const NavBand = styled.div`
  grid-column: 2 / -1;
  grid-row: 2;
  display: flex;
  padding-left: 149px;
  background: #e0e0e0;
`

const NavItem = styled.div<{ $dark?: boolean; $w: number }>`
  display: flex;
  flex-direction: column;
  align-items: center;
  justify-content: center;
  width: ${(p) => p.$w}px;
  padding-top: 3px;
  background: ${(p) => (p.$dark ? '#404040' : 'transparent')};
  font-size: 12px;
  font-weight: 800;
  line-height: 17px;
  color: ${(p) => (p.$dark ? '#fff' : '#262626')};
`

const SelectedCell = styled.div`
  grid-column: 2;
  grid-row: 2;
  border: 2px solid ${GREEN};
  border-top-width: 1px;
`

const SubBand = styled.div`
  grid-column: 2 / -1;
  grid-row: 3;
  display: flex;
  align-items: flex-end;
  padding-left: 108px;
  background: #404040;
`

const SubTab = styled.div<{ $on?: boolean }>`
  display: flex;
  align-items: center;
  justify-content: center;
  width: ${(p) => (p.$on ? 122 : 127)}px;
  height: 29px;
  padding-top: 1px;
  background: ${(p) => (p.$on ? '#fff' : 'transparent')};
  font-size: 12.2px;
  font-weight: 800;
  color: ${(p) => (p.$on ? '#262626' : '#fff')};
`

const BrandText = styled.div`
  grid-column: 2 / 5;
  grid-row: 4;
  margin-top: -2px;
  padding-left: 2px;
  font-size: 15.8px;
  font-weight: 900;
  line-height: 18px;
  letter-spacing: 0.2px;
  white-space: nowrap;
  color: #000;
  -webkit-text-stroke: 0.6px #000;
`

const LogoSvg = styled.svg`
  position: absolute;
  left: 28px;
  top: 20px;
  overflow: visible;
`

const HeadCell = styled.div<{ $col: number; $row: number }>`
  grid-column: ${(p) => p.$col};
  grid-row: ${(p) => p.$row};
  display: flex;
  align-items: center;
  margin: 1px;
  padding-left: 13px;
  background: #d9d9d9;
  font-size: 13.2px;
  font-weight: 700;
  line-height: 19px;
  color: #505050;
`

const ValueCell = styled.div<{ $col: number; $row: number }>`
  grid-column: ${(p) => p.$col};
  grid-row: ${(p) => p.$row};
  display: flex;
  align-items: center;
  padding-left: 14px;
  background: #f2f2f2;
  border-right: 1px solid #e2e2e2;
  border-bottom: 1px solid #dcdcdc;
  font-size: 13.4px;
  color: #404040;
`

const LevelCell = styled(HeadCell)`
  margin: 0 1px 1px 1px;
`

const ChartTitle = styled.div<{ $col: number }>`
  grid-column: ${(p) => p.$col} / span 2;
  grid-row: 5;
  align-self: center;
  padding-left: 15px;
  font-size: 15.8px;
  font-weight: 700;
  color: #1a1a1a;
`

const ChartFrame = styled.div<{ $from: number; $to: number; $mr: number; $px: number }>`
  grid-column: ${(p) => p.$from} / ${(p) => p.$to};
  grid-row: 6 / 15;
  display: flex;
  flex-direction: column;
  margin: 0 ${(p) => p.$mr}px 1px 0;
  padding: 27px ${(p) => p.$px}px 0;
  border: 1px solid #dcdcdc;
  background: #fff;
`

const Plot = styled.div`
  display: flex;
  justify-content: center;
  align-items: flex-end;
  flex: 0 0 261px;
  background: #f0f0f0;
`

const StackBar = styled.div`
  display: flex;
  flex-direction: column;
  align-items: center;
  width: 140px;
  height: 100%;
  background: #375623;
`

const RedCap = styled.div`
  align-self: stretch;
  flex: 0 0 4px;
  background: #c00000;
`

const StackLabel = styled.span`
  font-size: 10.4px;
  line-height: 14px;
  color: #fff;
  margin-top: 2px;
  & + & {
    margin-top: auto;
    margin-bottom: 6px;
  }
`

const SingleBarCol = styled.div`
  display: flex;
  flex-direction: column;
  align-items: center;
  width: 153px;
`

const BarValue = styled.span`
  margin-bottom: 7px;
  font-size: 10.4px;
  color: #404040;
`

const SingleBar = styled.div`
  align-self: stretch;
  height: 160px;
  background: #00b050;
`

const Legend = styled.div`
  display: flex;
  justify-content: center;
  gap: 12px;
  margin-top: 16px;
  font-size: 10.8px;
  color: #505050;
`

const LegendItem = styled.span`
  display: flex;
  align-items: center;
  gap: 2px;
`

const Swatch = styled.i<{ $c: string }>`
  width: 6px;
  height: 6px;
  background: ${(p) => p.$c};
`

const VScroll = styled.div`
  display: flex;
  flex-direction: column;
  align-items: center;
  flex: 1;
  padding-top: 7px;
  padding-bottom: 4px;
  background: #f6f6f6;
`

const VThumb = styled.div`
  flex: 0 0 18px;
  width: 10px;
  border-radius: 5px;
  background: #6f6f6f;
`

const VTrack = styled.div`
  flex: 1;
`

const HScrollRow = styled.div`
  display: flex;
  align-items: center;
  flex: 0 0 33px;
  padding-left: 6px;
  border-top: 1px solid #e6e6e6;
  background: #f1f1f1;
`

const HTrack = styled.div`
  display: flex;
  align-items: center;
  flex: 1;
  height: 100%;
  padding: 0 26px 0 11px;
`

const HThumb = styled.div`
  flex: 0 0 1474px;
  height: 10px;
  margin: 0 40px 0 4px;
  border-radius: 5px;
  background: #6f6f6f;
`

const StatusBar = styled.footer`
  display: flex;
  align-items: center;
  justify-content: space-between;
  flex: 1;
  padding-left: 12px;
  padding-right: 8px;
  border-top: 1px solid #d0d0d0;
  font-size: 10.3px;
  color: #444;
`

const StatusLeft = styled.div`
  display: flex;
  align-items: center;
`

const MacroSlot = styled.span`
  display: inline-flex;
  margin-left: 21px;
`

const AccessSlot = styled.span`
  display: inline-flex;
  align-items: center;
  gap: 2px;
  margin-left: 18px;
  b {
    font-weight: 700;
    color: #333;
  }
`

const StatusRight = styled.div`
  display: flex;
  align-items: center;
  height: 100%;
`

const ViewBtn = styled.span<{ $on?: boolean }>`
  display: flex;
  align-items: center;
  justify-content: center;
  width: 42px;
  height: 100%;
  background: ${(p) => (p.$on ? '#dcdcdc' : 'transparent')};
`

const ZoomSign = styled.span`
  display: flex;
  justify-content: center;
  width: 20px;
`

const ZoomTrack = styled.div`
  position: relative;
  width: 103px;
  height: 1px;
  background: #666;
  &::after {
    content: '';
    position: absolute;
    left: 51px;
    top: -3px;
    width: 1px;
    height: 7px;
    background: #666;
  }
`

const ZoomThumb = styled.span`
  position: absolute;
  left: 44px;
  top: -5px;
  width: 5px;
  height: 11px;
  background: #555;
`

const ZoomPct = styled.span`
  width: 22px;
  margin-left: 8px;
`
